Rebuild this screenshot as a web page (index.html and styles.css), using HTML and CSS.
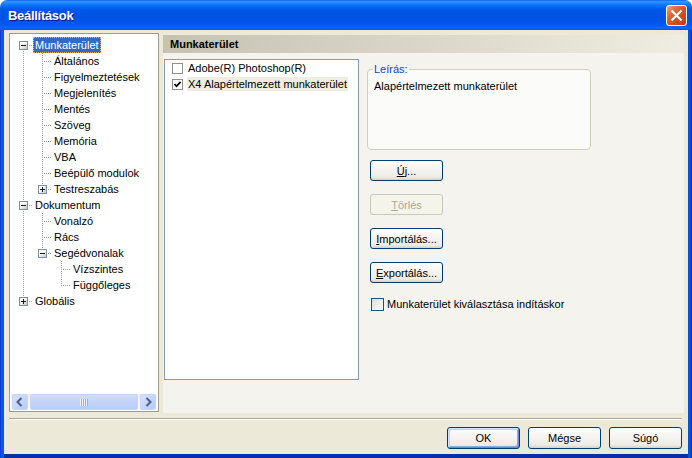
FILE: index.html
```html
<!DOCTYPE html>
<html lang="hu">
<head>
<meta charset="utf-8">
<title>Beállítások</title>
<link rel="stylesheet" href="styles.css">
</head>
<body>
<div class="window">
  <div class="titlebar">
    <span class="title">Beállítások</span>
    <span class="close"><svg width="19" height="19" viewBox="0 0 19 19"><path d="M4.5 4.5 L14.5 14.5 M14.5 4.5 L4.5 14.5" stroke="#fff" stroke-width="2.2" fill="none"/></svg></span>
  </div>
  <div class="frame">
    <div class="client">
      <div class="main">
        <div class="tree">
          <div class="tree-body">
            <div class="row"><span class="c r"><i class="box minus"></i></span><span class="lbl sel">Munkaterület</span></div>
            <div class="row"><span class="c v"></span><span class="c t"></span><span class="lbl">Általános</span></div>
            <div class="row"><span class="c v"></span><span class="c t"></span><span class="lbl">Figyelmeztetések</span></div>
            <div class="row"><span class="c v"></span><span class="c t"></span><span class="lbl">Megjelenítés</span></div>
            <div class="row"><span class="c v"></span><span class="c t"></span><span class="lbl">Mentés</span></div>
            <div class="row"><span class="c v"></span><span class="c t"></span><span class="lbl">Szöveg</span></div>
            <div class="row"><span class="c v"></span><span class="c t"></span><span class="lbl">Memória</span></div>
            <div class="row"><span class="c v"></span><span class="c t"></span><span class="lbl">VBA</span></div>
            <div class="row"><span class="c v"></span><span class="c t"></span><span class="lbl">Beépülő modulok</span></div>
            <div class="row"><span class="c v"></span><span class="c l"><i class="box plus"></i></span><span class="lbl">Testreszabás</span></div>
            <div class="row"><span class="c t"><i class="box minus"></i></span><span class="lbl">Dokumentum</span></div>
            <div class="row"><span class="c v"></span><span class="c t"></span><span class="lbl">Vonalzó</span></div>
            <div class="row"><span class="c v"></span><span class="c t"></span><span class="lbl">Rács</span></div>
            <div class="row"><span class="c v"></span><span class="c l"><i class="box minus"></i></span><span class="lbl">Segédvonalak</span></div>
            <div class="row"><span class="c v"></span><span class="c"></span><span class="c t"></span><span class="lbl">Vízszintes</span></div>
            <div class="row"><span class="c v"></span><span class="c"></span><span class="c l"></span><span class="lbl">Függőleges</span></div>
            <div class="row"><span class="c l"><i class="box plus"></i></span><span class="lbl">Globális</span></div>
          </div>
          <div class="hscroll">
            <span class="sb-btn"><svg width="14" height="14" viewBox="0 0 14 14"><path d="M8.5 3 L4.5 7 L8.5 11" stroke="#4d6185" stroke-width="2" fill="none"/></svg></span>
            <span class="thumb"><span class="grip"></span></span>
            <span class="sb-btn"><svg width="14" height="14" viewBox="0 0 14 14"><path d="M5.5 3 L9.5 7 L5.5 11" stroke="#4d6185" stroke-width="2" fill="none"/></svg></span>
          </div>
        </div>
        <div class="panel">
          <div class="panel-head">Munkaterület</div>
          <div class="panel-body">
            <div class="list">
              <div class="item"><span class="lv-check"></span><span class="item-text">Adobe(R) Photoshop(R)</span></div>
              <div class="item"><span class="lv-check"><svg width="9" height="9" viewBox="0 0 9 9"><path d="M1.5 4 L3.5 6.2 L7.6 1.8" stroke="#000" stroke-width="1.7" fill="none"/></svg></span><span class="item-text hl">X4 Alapértelmezett munkaterület</span></div>
            </div>
            <div class="side">
              <fieldset class="desc">
                <legend>Leírás:</legend>
                <p>Alapértelmezett munkaterület</p>
              </fieldset>
              <div class="btns">
                <span class="btn"><u>Ú</u>j...</span>
                <span class="btn disabled"><u>T</u>örlés</span>
                <span class="btn"><u>I</u>mportálás...</span>
                <span class="btn"><u>E</u>xportálás...</span>
              </div>
              <div class="opt"><span class="cb"></span><span>Munkaterület kiválasztása indításkor</span></div>
            </div>
          </div>
        </div>
      </div>
      <div class="sep"></div>
      <div class="footer">
        <span class="btn big default">OK</span>
        <span class="btn big">Mégse</span>
        <span class="btn big">Súgó</span>
      </div>
    </div>
  </div>
</div>
</body>
</html>
```
FILE: styles.css
```css
* { box-sizing: border-box; }
html, body { margin: 0; padding: 0; }
body {
  width: 692px; height: 458px; overflow: hidden;
  background: #fff;
  font-family: "Liberation Sans", Arial, sans-serif;
  font-size: 11px; color: #000;
}
.window {
  width: 692px; height: 458px;
  display: flex; flex-direction: column;
  border-radius: 7px 7px 0 0; overflow: hidden;
}
.titlebar {
  height: 30px; flex: none;
  display: flex; align-items: flex-start; justify-content: space-between;
  padding: 0 5px 0 8px;
  background: linear-gradient(to bottom, #0058ee 0%, #3a93ff 4%, #288eff 8%, #127dff 14%, #036ffc 20%, #0262ee 26%, #0057e5 32%, #0054e3 60%, #0055eb 76%, #005bf5 86%, #026afe 92%, #0062ef 96%, #0052d6 100%);
}
.title {
  color: #fff; font-weight: bold; font-size: 13px; line-height: 31px;
  letter-spacing: -0.3px;
  text-shadow: 1px 1px 0 #0f1089;
}
.close {
  width: 21px; height: 21px; margin-top: 5px;
  border: 1px solid #fff; border-radius: 3px;
  background: linear-gradient(135deg, #f0a285 0%, #e5683f 30%, #da4a1f 60%, #c93a10 100%);
  display: flex; align-items: center; justify-content: center;
}
.frame {
  flex: 1; display: flex;
  padding: 0 4px 4px;
  background:
    linear-gradient(to right, #0a36c8, #0a5ce9 2px, #0855dd 4px) 0 0 / 4px 100% no-repeat,
    linear-gradient(to left, #0a2fb8, #0a50dc 2px, #0852d8 4px) 100% 0 / 4px 100% no-repeat,
    linear-gradient(to bottom, #0848d4, #0a3fc8 3px, #0a2da8 4px);
}
.client {
  flex: 1; display: flex; flex-direction: column;
  background: #ece9d8;
}
.main {
  flex: none; height: 383px;
  display: flex; gap: 4px;
  padding: 3px 4px 0 5px;
}
/* tree */
.tree {
  width: 150px; height: 379px; flex: none;
  border: 1px solid #9d9b90; padding: 1px;
  background: #fff;
  display: flex; flex-direction: column;
}
.tree-body { flex: 1; padding-top: 2px; }
.row { display: flex; height: 16px; padding-left: 3px; }
.c { width: 19px; height: 16px; flex: none; display: block; }
.lbl { line-height: 16px; padding: 0 2px; white-space: nowrap; }
.sel {
  background: #316ac5; color: #fff;
  outline: 1px dotted #e0b060; outline-offset: -1px;
}
.v {
  background: repeating-linear-gradient(to bottom, #a0a0a0 0 1px, transparent 1px 2px) 9px 0 / 1px 16px no-repeat;
}
.t {
  background:
    repeating-linear-gradient(to right, #a0a0a0 0 1px, transparent 1px 2px) 11px 8px / 8px 1px no-repeat,
    repeating-linear-gradient(to bottom, #a0a0a0 0 1px, transparent 1px 2px) 9px 0 / 1px 16px no-repeat;
}
.l {
  background:
    repeating-linear-gradient(to right, #a0a0a0 0 1px, transparent 1px 2px) 11px 8px / 8px 1px no-repeat,
    repeating-linear-gradient(to bottom, #a0a0a0 0 1px, transparent 1px 2px) 9px 0 / 1px 9px no-repeat;
}
.r {
  background:
    repeating-linear-gradient(to right, #a0a0a0 0 1px, transparent 1px 2px) 11px 8px / 8px 1px no-repeat,
    repeating-linear-gradient(to bottom, #a0a0a0 0 1px, transparent 1px 2px) 9px 8px / 1px 8px no-repeat;
}
.box {
  display: block; width: 9px; height: 9px;
  margin: 4px 0 0 5px;
  border: 1px solid #7f8fa0;
}
.minus {
  background:
    linear-gradient(#1a1a1a, #1a1a1a) 1px 3px / 5px 1px no-repeat,
    linear-gradient(135deg, #fff 30%, #c9c6b8 100%);
}
.plus {
  background:
    linear-gradient(#1a1a1a, #1a1a1a) 1px 3px / 5px 1px no-repeat,
    linear-gradient(#1a1a1a, #1a1a1a) 3px 1px / 1px 5px no-repeat,
    linear-gradient(135deg, #fff 30%, #c9c6b8 100%);
}
/* scrollbar */
.hscroll {
  height: 16px; flex: none;
  display: flex; padding: 0 1px;
  background: linear-gradient(to bottom, #f1efe6, #fdfdfa);
}
.sb-btn {
  width: 16px; flex: none;
  border: 1px solid #c4d4fa; border-radius: 2px;
  background: linear-gradient(135deg, #d6e2fd, #b6cafa);
  display: flex; align-items: center; justify-content: center;
}
.thumb {
  flex: 1; margin: 0 2px;
  border: 1px solid #c4d4fa; border-radius: 2px;
  background: linear-gradient(to bottom, #cfdcfd, #b8ccf8);
  display: flex; align-items: center; justify-content: center;
}
.grip {
  width: 8px; height: 7px;
  background: repeating-linear-gradient(to right, #eef4fe 0 1px, #8cb0f8 1px 2px);
}
/* right panel */
.panel {
  width: 521px; height: 378px; margin-top: 2px;
  background: #f4f3ee;
  display: flex; flex-direction: column;
}
.panel-head {
  height: 18px; line-height: 18px; padding-left: 7px;
  font-weight: bold;
  background: linear-gradient(to right, #c5c2b2, #efece1);
}
.panel-body { display: flex; padding: 6px 0 0 1px; }
.list {
  width: 195px; height: 321px; flex: none;
  border: 1px solid #7f9db9; background: #fff;
}
.item { display: flex; align-items: center; height: 16px; padding-left: 7px; }
.lv-check {
  width: 11px; height: 11px; flex: none; margin-right: 4px;
  border: 1px solid #8e8f8f; background: #fff;
  display: flex; align-items: center; justify-content: center;
}
.item-text { padding: 0 1px; line-height: 14px; white-space: nowrap; }
.hl { background: #efede0; }
.side {
  margin-left: 8px;
  display: flex; flex-direction: column; align-items: flex-start;
}
.desc {
  width: 224px; height: 87px; min-width: 0;
  margin: 4px 0 0; padding: 0 5px;
  border: 1px solid #d0d0bf; border-radius: 4px;
  background: #fbfbf9;
}
.desc legend {
  padding: 0 1px; color: #0046d5; line-height: 12px; font-size: 11px;
}
.desc p { margin: 5px 0 0; padding-left: 1px; line-height: 13px; }
.btns {
  display: flex; flex-direction: column; gap: 13px;
  margin: 10px 0 0 3px;
}
.btn {
  width: 73px; height: 21px;
  display: flex; align-items: center; justify-content: center;
  border: 1px solid #003c74; border-radius: 3px;
  background: linear-gradient(to bottom, #ffffff 0%, #f6f5f1 40%, #ecebe6 85%, #d6d0c5 100%);
  color: #000; white-space: nowrap;
}
.btn.disabled {
  border-color: #c9c7ba; color: #aca899;
  background: #f5f4ea;
}
.opt { display: flex; align-items: center; margin: 15px 0 0 4px; line-height: 13px; }
.cb {
  width: 13px; height: 13px; margin-right: 3px; flex: none;
  border: 1px solid #1c5180;
  background: linear-gradient(135deg, #dcdcd7, #fff);
}
/* footer */
.sep {
  height: 2px; margin: 5px 6px 0 5px;
  border-top: 1px solid #aca899; border-bottom: 1px solid #fff;
}
.footer {
  display: flex; justify-content: flex-end; gap: 8px;
  padding: 7px 6px 0 0;
}
.btn.big { height: 22px; }
.btn.default {
  box-shadow: inset 1px 1px 0 #cee7ff, inset -1px -1px 0 #6982ee, inset 2px 2px 0 #bcd4f6, inset -2px -2px 0 #89ade4;
}
```
